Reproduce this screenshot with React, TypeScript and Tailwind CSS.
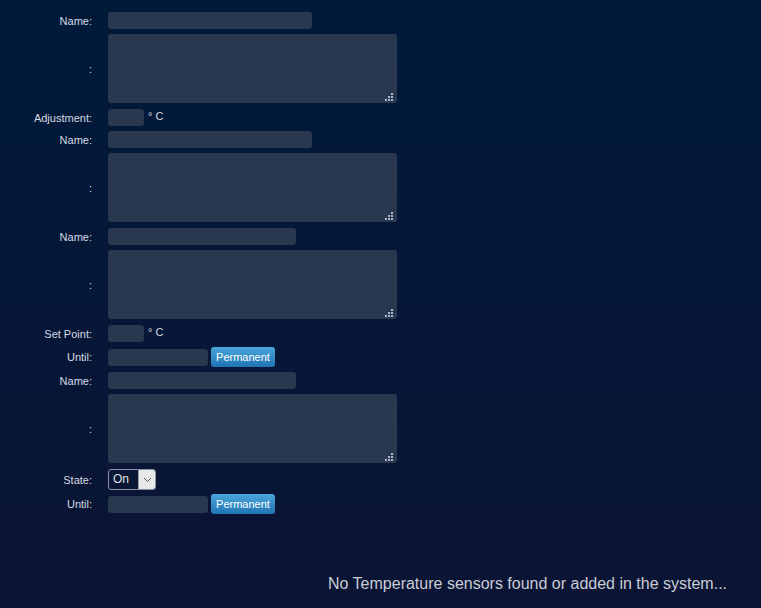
import React from "react";

const fieldBg = "bg-[#2a384f]";

function Label({ text }: { text: string }) {
	return (
		<div className="w-[92px] shrink-0 pt-[1px] text-right text-[11px] leading-[13px] text-[#d6dae2]">
			{text}
		</div>
	);
}

function TextInput({ width }: { width: string }) {
	return <input type="text" className={`${width} h-[17px] rounded-[3px] ${fieldBg} outline-none`} />;
}

function ResizeDots() {
	return (
		<svg
			width="8"
			height="8"
			viewBox="0 0 8 8"
			className="absolute right-[4px] bottom-[2px]"
			fill="#aeb8cc"
		>
			<rect x="6" y="0" width="2" height="2" />
			<rect x="3" y="3" width="2" height="2" />
			<rect x="6" y="3" width="2" height="2" />
			<rect x="0" y="6" width="2" height="2" />
			<rect x="3" y="6" width="2" height="2" />
			<rect x="6" y="6" width="2" height="2" />
		</svg>
	);
}

function NoteArea() {
	return (
		<div className="relative">
			<textarea className={`block w-[289px] h-[69px] resize-none rounded-[3px] ${fieldBg} outline-none`} />
			<ResizeDots />
		</div>
	);
}

function PermanentButton() {
	return (
		<button className="h-[20px] w-[64px] rounded-[3px] bg-gradient-to-b from-[#4aa6dc] to-[#1f75b4] text-[11px] text-white">
			Permanent
		</button>
	);
}

function Row({ label, mt, children }: { label: string; mt: string; children: React.ReactNode }) {
	return (
		<div className={`flex items-center gap-[16px] ${mt}`}>
			<Label text={label} />
			{children}
		</div>
	);
}

function StateSelect() {
	return (
		<div className="flex h-[21px] w-[48px] overflow-hidden rounded-[3px] border border-[#8a93a3] bg-[#0a1634]">
			<div className="flex-1 pl-[4px] text-[12px] leading-[19px] text-[#dfe2e8]">On</div>
			<div className="flex w-[17px] items-center justify-center border-l border-[#9aa1ad] bg-[#e7e8ea]">
				<svg width="9" height="6" viewBox="0 0 9 6" fill="none" stroke="#555" strokeWidth="1">
					<path d="M1 1l3.5 3.5L8 1" />
				</svg>
			</div>
		</div>
	);
}

function Degrees() {
	return <span className="self-start mt-[1px] -ml-[12px] text-[11px] leading-[13px] text-[#d6dae2]">° C</span>;
}

export default function App() {
	return (
		<div
			className="h-[608px] w-full bg-gradient-to-b from-[#001a3a] to-[#0b1434]"
			style={{ fontFamily: '"Liberation Sans", Arial, sans-serif' }}
		>
			<div className="flex flex-col pt-[12px]">
				<Row label="Name:" mt="mt-0">
					<TextInput width="w-[204px]" />
				</Row>
				<Row label=":" mt="mt-[5px]">
					<NoteArea />
				</Row>
				<Row label="Adjustment:" mt="mt-[6px]">
					<TextInput width="w-[36px]" />
					<Degrees />
				</Row>
				<Row label="Name:" mt="mt-[5px]">
					<TextInput width="w-[204px]" />
				</Row>
				<Row label=":" mt="mt-[5px]">
					<NoteArea />
				</Row>
				<Row label="Name:" mt="mt-[6px]">
					<TextInput width="w-[188px]" />
				</Row>
				<Row label=":" mt="mt-[5px]">
					<NoteArea />
				</Row>
				<Row label="Set Point:" mt="mt-[6px]">
					<TextInput width="w-[36px]" />
					<Degrees />
				</Row>
				<Row label="Until:" mt="mt-[5px]">
					<div className="flex items-center gap-[3px]">
						<TextInput width="w-[100px]" />
						<PermanentButton />
					</div>
				</Row>
				<Row label="Name:" mt="mt-[5px]">
					<TextInput width="w-[188px]" />
				</Row>
				<Row label=":" mt="mt-[5px]">
					<NoteArea />
				</Row>
				<Row label="State:" mt="mt-[6px]">
					<StateSelect />
				</Row>
				<Row label="Until:" mt="mt-[4px]">
					<div className="flex items-center gap-[3px]">
						<TextInput width="w-[100px]" />
						<PermanentButton />
					</div>
				</Row>
			</div>
			<p className="mt-[61px] pl-[328px] text-[16px] leading-[18px] text-[#c9cdd6]">
				No Temperature sensors found or added in the system...
			</p>
		</div>
	);
}
